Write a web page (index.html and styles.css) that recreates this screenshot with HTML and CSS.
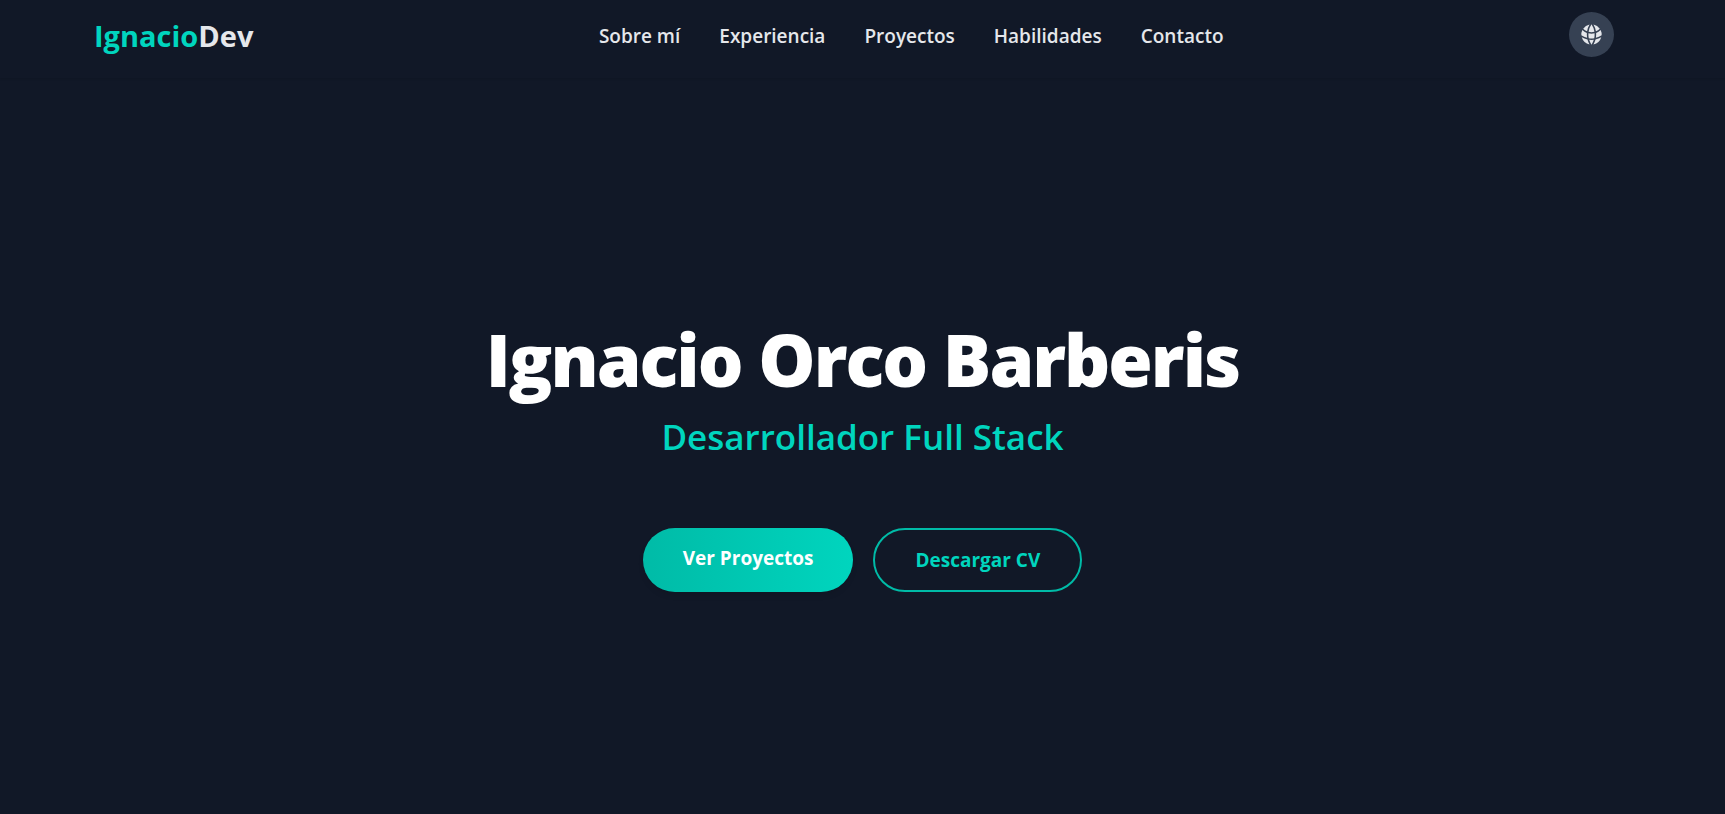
FILE: index.html
```html
<!DOCTYPE html>
<html lang="es">
<head>
<meta charset="utf-8">
<title>IgnacioDev</title>
<link rel="stylesheet" href="styles.css">
</head>
<body>
<header class="header">
  <a class="logo" href="#inicio"><span class="logo-accent">Ignacio</span>Dev</a>
  <nav class="nav">
    <a class="nav-link" href="#sobre-mi">Sobre mí</a>
    <a class="nav-link" href="#experiencia">Experiencia</a>
    <a class="nav-link" href="#proyectos">Proyectos</a>
    <a class="nav-link" href="#habilidades">Habilidades</a>
    <a class="nav-link" href="#contacto">Contacto</a>
  </nav>
  <button class="lang" type="button" aria-label="Cambiar idioma">
    <svg class="lang-icon" viewBox="0 0 24 24" fill="currentColor" aria-hidden="true"><path d="M21.721 12.752a9.711 9.711 0 0 0-.945-5.003 12.754 12.754 0 0 1-4.339 2.708 18.991 18.991 0 0 1-.214 4.772 17.165 17.165 0 0 0 5.498-2.477ZM14.634 15.55a17.324 17.324 0 0 0 .332-4.647c-.952.227-1.945.347-2.966.347-1.021 0-2.014-.12-2.966-.347a17.515 17.515 0 0 0 .332 4.647 17.385 17.385 0 0 0 5.268 0ZM9.772 17.119a18.963 18.963 0 0 0 4.456 0A17.182 17.182 0 0 1 12 21.724a17.18 17.18 0 0 1-2.228-4.605ZM7.777 15.23a18.87 18.87 0 0 1-.214-4.774 12.753 12.753 0 0 1-4.34-2.708 9.711 9.711 0 0 0-.944 5.004 17.165 17.165 0 0 0 5.498 2.477ZM21.356 14.752a9.765 9.765 0 0 1-7.478 6.817 18.64 18.64 0 0 0 1.988-4.718 18.627 18.627 0 0 0 5.49-2.098ZM2.644 14.752c1.682.971 3.53 1.688 5.49 2.099a18.64 18.64 0 0 0 1.988 4.718 9.765 9.765 0 0 1-7.478-6.816ZM13.878 2.43a9.755 9.755 0 0 1 6.116 3.986 11.267 11.267 0 0 1-3.746 2.504 18.63 18.63 0 0 0-2.37-6.49ZM12 2.276a17.152 17.152 0 0 1 2.805 7.121c-.897.23-1.837.353-2.805.353-.968 0-1.908-.122-2.805-.353A17.151 17.151 0 0 1 12 2.276ZM10.122 2.43a18.629 18.629 0 0 0-2.37 6.49 11.266 11.266 0 0 1-3.746-2.504 9.754 9.754 0 0 1 6.116-3.985Z"/></svg>
  </button>
</header>
<main class="hero" id="inicio">
  <h1 class="name">Ignacio Orco Barberis</h1>
  <p class="role">Desarrollador Full Stack</p>
  <div class="actions">
    <a class="btn btn-primary" href="#proyectos">Ver Proyectos</a>
    <a class="btn btn-outline" href="#cv">Descargar CV</a>
  </div>
</main>
</body>
</html>
```
FILE: styles.css
```css
* { box-sizing: border-box; }
body {
  margin: 0;
  min-height: 100vh;
  display: flex;
  flex-direction: column;
  background: #111827;
  color: #e5e7eb;
  font-family: "Segoe UI", "Open Sans", "Noto Sans", sans-serif;
}
a { color: inherit; text-decoration: none; }
.header {
  display: flex;
  justify-content: space-between;
  align-items: flex-start;
  padding: 12px 111px 18px 94px;
  box-shadow: 0 1px 2px rgba(0, 0, 0, 0.1);
}
.logo { font-size: 29px; line-height: 48px; font-weight: 700; }
.logo-accent { color: #00d5be; }
.nav { display: flex; gap: 39px; }
.nav-link { font-size: 19px; line-height: 48px; font-weight: 600; }
.lang {
  display: flex;
  align-items: center;
  justify-content: center;
  width: 45px;
  height: 45px;
  padding: 0;
  border: 0;
  border-radius: 50%;
  background: #364153;
  color: #e5e7eb;
}
.lang-icon { width: 25px; height: 25px; }
.hero {
  flex: 1;
  display: flex;
  flex-direction: column;
  align-items: center;
  justify-content: center;
  padding-top: 13px;
  text-align: center;
}
.name {
  margin: 0;
  font-size: 72px;
  line-height: 90px;
  font-weight: 800;
  letter-spacing: -2px;
  color: #fff;
}
.role {
  margin: 8px 0 66px;
  font-size: 35px;
  line-height: 50px;
  font-weight: 600;
  color: #00d5be;
}
.actions { display: flex; gap: 20px; }
.btn {
  padding: 16px 40px;
  border-radius: 32px;
  font-size: 19px;
  line-height: 28px;
  font-weight: 700;
}
.btn-primary {
  background: linear-gradient(to right, #00bba7, #00d5be);
  box-shadow: 0 4px 6px -1px rgba(0, 0, 0, 0.1);
  color: #fff;
}
.btn-outline { border: 2px solid #00bba7; color: #00d5be; }
```
